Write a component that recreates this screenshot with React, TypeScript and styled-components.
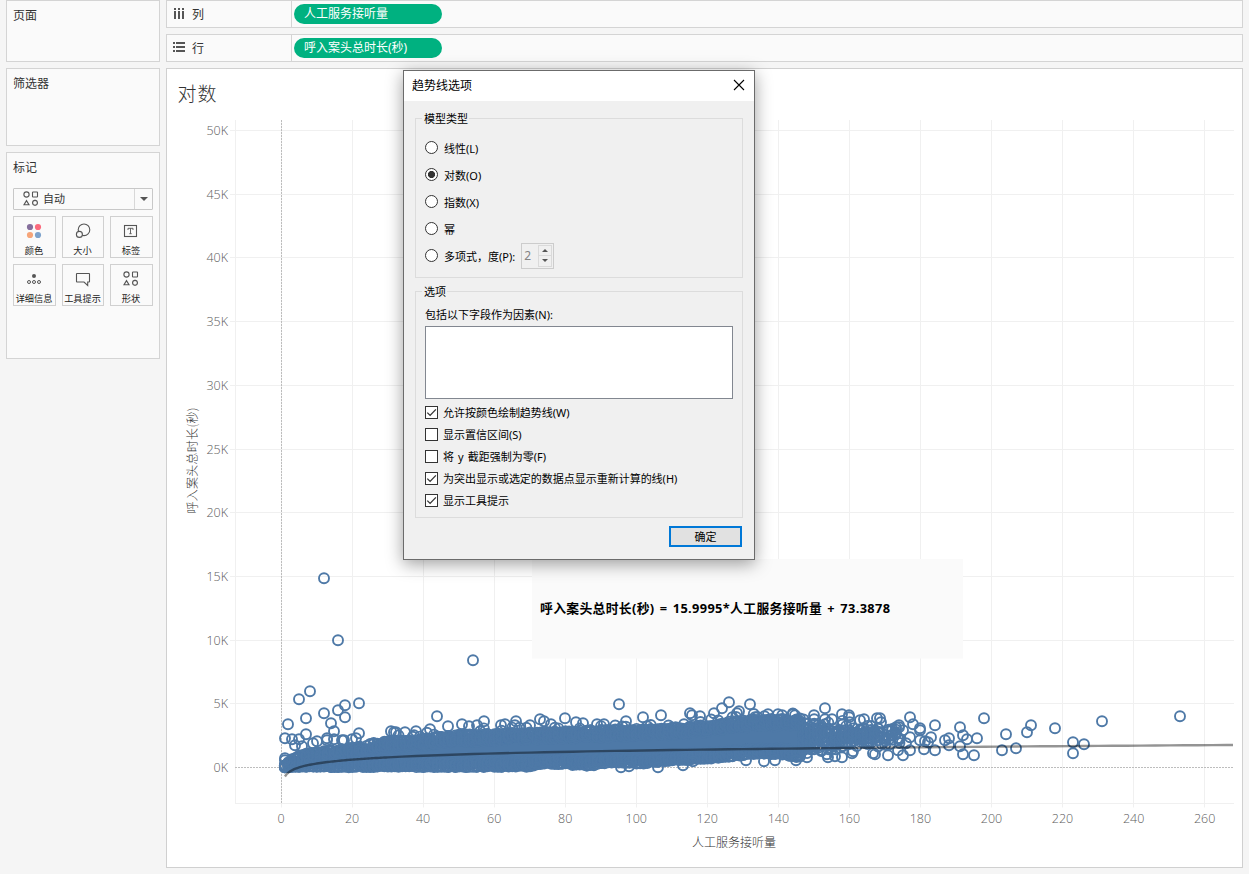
import React from 'react';
import styled, { createGlobalStyle } from 'styled-components';

const Global = createGlobalStyle`
  *{box-sizing:border-box}
  body{margin:0;background:#f5f5f5;font-family:"Open Sans","Noto Sans CJK SC",sans-serif;overflow:hidden}
`;

const cjk = '"Noto Sans","Noto Sans CJK SC",sans-serif';

const Page = styled.div`
  width:1249px;height:874px;display:flex;gap:6px;padding:0 6px;background:#f5f5f5;position:relative;
`;
const Side = styled.div`width:154px;display:flex;flex-direction:column;gap:6px;`;
const Card = styled.section<{ $h: number }>`
  height:${p => p.$h}px;border:1px solid #d4d4d4;background:#fafafa;padding:6px 6px;
`;
const CardTitle = styled.h2`
  margin:0;font:400 12px/18px ${cjk};color:#333;height:18px;
`;
const MarkSelect = styled.div`
  margin-top:11px;height:22px;width:140px;border:1px solid #c8c8c8;border-radius:1px;display:flex;align-items:center;
  font:11px/20px ${cjk};color:#333;padding-left:9px;gap:4px;
`;
const SelectArrow = styled.span`
  margin-left:auto;width:18px;height:20px;border-left:1px solid #d8d8d8;display:flex;align-items:center;justify-content:center;
`;
const Triangle = styled.i<{ $up?: boolean; $s: number }>`
  width:0;height:0;border:${p => p.$s}px solid transparent;
  border-${p => (p.$up ? 'bottom' : 'top')}-color:#555;border-${p => (p.$up ? 'top' : 'bottom')}-width:0;
`;
const MarkGrid = styled.div`
  display:grid;grid-template-columns:43px 42px 43px;column-gap:6px;row-gap:6px;margin-top:6px;width:140px;
`;
const MarkButton = styled.div`
  height:42px;border:1px solid #d0d0d0;display:flex;flex-direction:column;align-items:center;padding:6px 1px 0 0;
  font:9.2px/12px ${cjk};color:#222;white-space:nowrap;
  svg{display:block;flex:none;margin-bottom:6px}
`;
const Main = styled.div`width:1077px;display:flex;flex-direction:column;gap:6px;`;
const Shelf = styled.div`
  height:28px;border:1px solid #d4d4d4;background:#fafafa;display:flex;align-items:center;
`;
const ShelfLabel = styled.div`
  width:125px;height:26px;border-right:1px solid #d4d4d4;display:flex;align-items:center;padding:1px 0 0 6px;gap:6px;
  font:12px/18px ${cjk};color:#333;
  svg{display:block;margin-top:-3px}
`;
const Pill = styled.div`
  margin-left:2px;width:148px;height:20px;border-radius:10px;background:#00b180;color:#fff;
  font:12px/19px ${cjk};padding-left:10px;white-space:nowrap;
`;
const Sheet = styled.div`
  height:800px;border:1px solid #d0d0d0;background:#fff;
  svg{display:block}
`;

const Dialog = styled.div`
  position:absolute;left:403px;top:70px;width:352px;height:490px;border:1px solid #6b6b6b;background:#f0f0f0;
  box-shadow:0 4px 16px rgba(0,0,0,.38);color:#000;font:11px/16px ${cjk};
`;
const TitleBar = styled.header`
  height:30px;background:#fff;display:flex;justify-content:space-between;align-items:center;padding:0 9px 0 8px;
  font:12px/18px ${cjk};
  svg{display:block;margin-top:-2px}
`;
const Group = styled.fieldset<{ $h: number; $mt: number }>`
  margin:${p => p.$mt}px 11px 0;height:${p => p.$h}px;border:1px solid #dcdcdc;padding:0 9px;min-width:0;
`;
const Legend = styled.legend`padding:1px 1px 0 2px;margin-left:-3px;height:16px;line-height:16px;`;
const RadioRow = styled.div`
  height:27px;display:flex;align-items:center;white-space:nowrap;
`;
const RadioList = styled.div`padding-top:9px;`;
const Radio = styled.span<{ $on?: boolean }>`
  width:13px;height:13px;border:1px solid #333;border-radius:50%;margin-right:6px;margin-top:-2px;flex:none;
  background:${p => (p.$on ? 'radial-gradient(circle,#333 0 3.2px,#fff 3.9px)' : '#fff')};
`;
const Spin = styled.span`
  margin:-2px 0 0 6px;width:33px;height:26px;border:1px solid #ccc;display:flex;align-items:center;color:#838383;
  font:12px/22px ${cjk};padding:1px 1px 1px 2px;justify-content:space-between;
`;
const SpinButtons = styled.span`
  width:14px;height:22px;border:1px solid #dadada;display:flex;flex-direction:column;
`;
const SpinHalf = styled.span`
  flex:1;display:flex;align-items:center;justify-content:center;
  &+&{border-top:1px solid #dadada}
`;
const FieldLabel = styled.div`margin-top:8px;height:16px;white-space:nowrap;`;
const ListBox = styled.div`margin:3px 0 3px;width:308px;height:73px;border:1px solid #828790;background:#fff;`;
const CheckRow = styled.div`height:22px;display:flex;align-items:center;gap:5px;white-space:nowrap;word-spacing:1.3px;letter-spacing:-.02px;`;
const CheckBox = styled.span`
  width:13px;height:13px;border:1px solid #333;background:#fff;flex:none;margin-top:-2px;
  svg{display:block}
`;
const OkButton = styled.div`
  margin:8px 12px 0 auto;width:73px;height:21px;border:2px solid #0078d7;background:#e1e1e1;text-align:center;line-height:18px;
`;

const Shapes = () => (
  <svg width="16" height="16" viewBox="0 0 16 16" fill="none" stroke="#555" strokeWidth="1.1">
    <circle cx="3.5" cy="3.5" r="2.6" /><rect x="9.5" y="1" width="5" height="5" rx=".6" />
    <path d="M1 13.7h5L3.5 9.6z" /><circle cx="12" cy="11.8" r="2.4" />
    <path d="M12 8.8v1M12 13.8v1M9 11.8h1M14 11.8h1" strokeWidth=".8" />
  </svg>
);
const ColorIcon = () => (
  <svg width="16" height="16" viewBox="0 0 16 16">
    <circle cx="4" cy="4" r="3.1" fill="#856f9c" /><circle cx="12" cy="4" r="3.1" fill="#fb6a7d" />
    <circle cx="4" cy="12" r="3.1" fill="#f6a579" /><circle cx="12" cy="12" r="3.1" fill="#7ea3cc" />
  </svg>
);
const SizeIcon = () => (
  <svg width="16" height="16" viewBox="0 0 16 16" fill="none" stroke="#555" strokeWidth="1.1">
    <circle cx="9" cy="6.8" r="5.8" /><circle cx="4.4" cy="11.4" r="3" fill="#fafafa" />
  </svg>
);
const LabelIcon = () => (
  <svg width="16" height="16" viewBox="0 0 16 16" fill="none" stroke="#555">
    <rect x="1.5" y="2.5" width="12" height="11" strokeWidth="1.1" />
    <path d="M5 7V5.3h5V7M7.5 5.3v5.4M6.3 10.7h2.4" strokeWidth=".9" />
  </svg>
);
const DetailIcon = () => (
  <svg width="16" height="16" viewBox="0 0 16 16" fill="none" stroke="#555">
    <circle cx="8" cy="5" r="2" fill="#555" stroke="none" />
    <circle cx="3" cy="11" r="1.5" /><circle cx="8" cy="11" r="1.5" /><circle cx="13" cy="11" r="1.5" />
  </svg>
);
const TooltipIcon = () => (
  <svg width="16" height="16" viewBox="0 0 16 16" fill="none" stroke="#555" strokeWidth="1.1">
    <path d="M2 2.5h12q.5 0 .5.5v7.5q0 .5-.5.5h-1.3v3.5L9 11H2q-.5 0-.5-.5V3q0-.5.5-.5z" />
  </svg>
);
const Check = () => (
  <svg width="11" height="11" viewBox="0 0 11 11" fill="none" stroke="#333" strokeWidth="1.3"><path d="M1.3 5.6l2.8 2.8 5.8-6" /></svg>
);

const PLOT = { left: 235, right: 1234, top: 120, bottom: 803.5 };
const px = (v: number) => 281.3 + v * 3.5525;
const py = (k: number) => 767.5 - k * 12.74;

const topEdge = [[285, 765], [290, 760], [300, 754], [320, 751], [340, 749], [360, 746], [380, 741], [400, 740], [420, 739], [440, 736], [460, 734], [480, 734], [500, 733], [560, 731], [620, 729], [660, 728], [690, 726], [710, 724], [730, 721], [760, 719], [800, 718], [820, 719], [860, 722], [885, 727]];
const bottomEdge = [[285, 767], [470, 767], [530, 766.5], [540, 764], [560, 764], [590, 766], [615, 762], [640, 764], [665, 761], [700, 759], [730, 757], [750, 754], [780, 754], [798, 757], [815, 752], [830, 751], [860, 749], [885, 746]];

const edgeAt = (pts: number[][], x: number) => {
  for (let i = 1; i < pts.length; i++) {
    if (x <= pts[i][0]) {
      const [x0, y0] = pts[i - 1];
      const [x1, y1] = pts[i];
      return y0 + ((x - x0) / (x1 - x0)) * (y1 - y0);
    }
  }
  return pts[pts.length - 1][1];
};

const makeRandom = (seed: number) => () => {
  seed = (seed * 1664525 + 1013904223) % 4294967296;
  return seed / 4294967296;
};

const buildCloud = () => {
  const rnd = makeRandom(17);
  const out: number[][] = [];
  for (let v = 1; v <= 174; v++) {
    const x = px(v);
    const t = edgeAt(topEdge, x);
    const b = edgeAt(bottomEdge, x);
    if (x < 800) {
      out.push([x, Math.min(b, t + rnd() * 3)], [x, b - rnd() * 1.5]);
      for (let i = 0; i < 4; i++) out.push([x, Math.min(b, t + rnd() * 8)], [x, Math.max(t, b - rnd() * 7)]);
      if (v > 28 && rnd() < 0.3) out.push([x, t - 2 - rnd() * 4]);
    } else {
      const n = x < 820 ? 13 : x < 845 ? 9 : x < 880 ? 7 : 3;
      for (let i = 0; i < n; i++) {
        const spread = (rnd() + rnd()) / 2;
        out.push([x, t + (i % 3 ? spread : rnd()) * (b - t)]);
      }
    }
  }
  return out;
};
const cloud = buildCloud();

const corePath = (() => {
  const xs: number[] = [];
  for (let x = 284; x <= 804; x += 4) xs.push(x);
  const up = xs.map(x => `${x},${edgeAt(topEdge, x) + 1}`);
  const down = xs.slice().reverse().map(x => `${x},${edgeAt(bottomEdge, x) + 1}`);
  return 'M' + up.concat(down).join('L') + 'Z';
})();

const outliers = [
  [324, 578], [338, 640], [473, 660], [310, 691], [299, 699], [288, 724], [306, 718], [324, 713], [338, 710], [345, 705], [345, 717], [359, 703], [331, 723], [334, 731],
  [285, 738], [292, 739], [299, 739], [306, 734], [295, 745], [302, 746], [313, 743], [317, 741], [327, 738], [327, 740], [334, 739], [342, 740], [344, 740], [356, 738], [352, 739], [359, 733], [285, 758], [285, 760],
  [391, 731], [394, 732], [396, 732], [405, 732], [416, 731], [414, 735], [430, 729], [437, 716], [448, 726], [462, 724], [469, 726], [477, 725], [484, 721], [501, 725], [505, 724], [515, 725], [516, 721], [530, 725], [540, 719], [544, 721], [551, 724], [565, 718], [576, 722], [583, 723], [597, 724], [604, 724], [619, 704], [626, 721], [643, 717], [661, 715], [684, 724], [690, 713], [692, 715], [700, 716], [714, 713], [722, 708], [729, 702], [737, 713], [739, 711], [750, 704], [755, 717], [768, 714], [778, 714], [793, 714], [795, 715], [814, 715], [825, 708], [825, 719],
  [842, 714], [849, 715], [849, 717], [860, 720], [864, 719], [877, 718], [880, 718], [881, 722], [832, 719], [889, 731], [892, 729], [896, 727], [899, 725], [899, 727], [903, 730], [898, 738], [890, 744], [898, 750], [888, 755], [903, 755], [906, 743], [910, 717], [913, 724], [910, 737], [910, 750], [920, 728], [920, 730], [920, 740], [925, 741], [928, 742], [924, 749], [931, 737], [935, 725], [935, 750], [945, 740], [949, 738], [949, 745], [960, 727], [963, 735], [967, 739], [960, 746], [963, 754], [974, 755], [977, 738], [984, 718], [1002, 750], [1006, 734], [1016, 748], [1027, 732], [1031, 725], [1055, 728], [1073, 742], [1073, 753], [1084, 744], [1102, 721], [1180, 716],
  [658, 767], [683, 765], [693, 761], [746, 760], [764, 761], [775, 760], [796, 760], [807, 757], [827, 754], [828, 757], [835, 756], [842, 757], [852, 753], [853, 751], [873, 753], [875, 754], [621, 767], [629, 766],
];

const trend = (() => {
  const pts: string[] = [];
  for (let v = 1; v <= 268; v += v < 30 ? 0.5 : 4) pts.push(`${px(v).toFixed(1)},${(776.5 - 5.63 * Math.log(v)).toFixed(2)}`);
  pts.push('1233,745');
  return 'M' + pts.join('L');
})();

const Tick = styled.text`font:12.5px "Open Sans","Noto Sans",sans-serif;fill:#5c5c5c;font-weight:300;`;
const AxisTitle = styled.text`font:12px "Noto Sans CJK SC",sans-serif;font-weight:300;fill:#333;`;
const SheetTitle = styled.text`font:300 19px "Noto Sans CJK SC",sans-serif;fill:#333;`;
const Equation = styled.text`font:700 12.8px "Open Sans","Noto Sans CJK SC",sans-serif;fill:#000;word-spacing:1.6px;`;

const Chart = () => (
  <svg width="1075" height="798" viewBox="167 69 1075 798">
    <SheetTitle x="177.5" y="101" textLength="39">对数</SheetTitle>
    <g stroke="#f0f0f0" strokeWidth="1">
      {Array.from({ length: 14 }, (_, i) => {
        const x = Math.floor(px(i * 20)) + 0.5;
        return <line key={i} x1={x} x2={x} y1={PLOT.top} y2={PLOT.bottom + 4} />;
      })}
      {Array.from({ length: 10 }, (_, i) => {
        const y = Math.floor(py((i + 1) * 5)) + 0.5;
        return <line key={i} x1={PLOT.left - 5} x2={PLOT.right} y1={y} y2={y} />;
      })}
      <line x1="235.5" x2="235.5" y1={PLOT.top} y2={PLOT.bottom} />
      <line x1="235" x2={PLOT.right} y1="803.5" y2="803.5" />
    </g>
    <g stroke="#bdbdbd" strokeDasharray="2 1">
      <line x1="281.5" x2="281.5" y1={PLOT.top} y2={PLOT.bottom} />
      <line x1="235" x2={PLOT.right} y1="767.5" y2="767.5" />
    </g>
    {Array.from({ length: 11 }, (_, i) => (
      <Tick key={i} x="228" y={py(i * 5) + 4.5} textAnchor="end">{i * 5}K</Tick>
    ))}
    {Array.from({ length: 14 }, (_, i) => (
      <Tick key={i} x={px(i * 20) - 0.3} y="823" textAnchor="middle">{i * 20}</Tick>
    ))}
    <AxisTitle x="734" y="847" textAnchor="middle">人工服务接听量</AxisTitle>
    <AxisTitle transform="translate(196.5 460.5) rotate(-90)" textAnchor="middle" textLength="106">呼入案头总时长(秒)</AxisTitle>
    <rect x="532" y="559" width="431" height="99.5" fill="#fafafa" />
    <Equation x="540" y="613" textLength="350">呼入案头总时长(秒) = 15.9995*人工服务接听量 + 73.3878</Equation>
    <path d={corePath} fill="#4e79a7" stroke="#4e79a7" strokeWidth="2" />
    <g fill="none" stroke="#4e79a7" strokeWidth="1.9">
      {cloud.concat(outliers).map(([x, y], i) => <circle key={i} cx={x} cy={y + 0.2} r="5" />)}
    </g>
    <path d={trend} fill="none" stroke="#000" strokeOpacity=".42" strokeWidth="2.4" />
  </svg>
);

const radios = ['线性(L)', '对数(O)', '指数(X)', '幂', '多项式，度(P):'];
const checks: [string, boolean][] = [
  ['允许按颜色绘制趋势线(W)', true],
  ['显示置信区间(S)', false],
  ['将 y 截距强制为零(F)', false],
  ['为突出显示或选定的数据点显示重新计算的线(H)', true],
  ['显示工具提示', true],
];
const marks: [string, React.FC][] = [
  ['颜色', ColorIcon], ['大小', SizeIcon], ['标签', LabelIcon],
  ['详细信息', DetailIcon], ['工具提示', TooltipIcon], ['形状', Shapes],
];

export default function App() {
  return (
    <>
      <Global />
      <Page>
        <Side>
          <Card $h={62}><CardTitle>页面</CardTitle></Card>
          <Card $h={78}><CardTitle>筛选器</CardTitle></Card>
          <Card $h={207}>
            <CardTitle>标记</CardTitle>
            <MarkSelect><Shapes />自动<SelectArrow><Triangle $s={4} /></SelectArrow></MarkSelect>
            <MarkGrid>
              {marks.map(([name, Icon]) => <MarkButton key={name}><Icon />{name}</MarkButton>)}
            </MarkGrid>
          </Card>
        </Side>
        <Main>
          <Shelf>
            <ShelfLabel>
              <svg width="13" height="13" fill="#555"><path d="M1 1h2v2H1zM1 4h2v8H1zM5 1h2v2H5zM5 4h2v8H5zM9 1h2v2H9zM9 4h2v8H9z" /></svg>列
            </ShelfLabel>
            <Pill>人工服务接听量</Pill>
          </Shelf>
          <Shelf>
            <ShelfLabel>
              <svg width="13" height="13" fill="#555"><path d="M0 1h2v2H0zM3 1h9v2H3zM0 5h2v2H0zM3 5h9v2H3zM0 9h2v2H0zM3 9h9v2H3z" /></svg>行
            </ShelfLabel>
            <Pill>呼入案头总时长(秒)</Pill>
          </Shelf>
          <Sheet><Chart /></Sheet>
        </Main>
        <Dialog>
          <TitleBar>
            趋势线选项
            <svg width="12" height="12" stroke="#000" strokeWidth="1.1"><path d="M1 1l10 10M11 1L1 11" /></svg>
          </TitleBar>
          <Group $h={168} $mt={9}>
            <Legend>模型类型</Legend>
            <RadioList>
              {radios.map((name, i) => (
                <RadioRow key={name}>
                  <Radio $on={i === 1} />{name}
                  {i === 4 && (
                    <Spin>2<SpinButtons>
                      <SpinHalf><Triangle $up $s={3} /></SpinHalf>
                      <SpinHalf><Triangle $s={3} /></SpinHalf>
                    </SpinButtons></Spin>
                  )}
                </RadioRow>
              ))}
            </RadioList>
          </Group>
          <Group $h={235} $mt={5}>
            <Legend>选项</Legend>
            <FieldLabel>包括以下字段作为因素(N):</FieldLabel>
            <ListBox />
            {checks.map(([name, on]) => (
              <CheckRow key={name}><CheckBox>{on && <Check />}</CheckBox>{name}</CheckRow>
            ))}
          </Group>
          <OkButton>确定</OkButton>
        </Dialog>
      </Page>
    </>
  );
}
